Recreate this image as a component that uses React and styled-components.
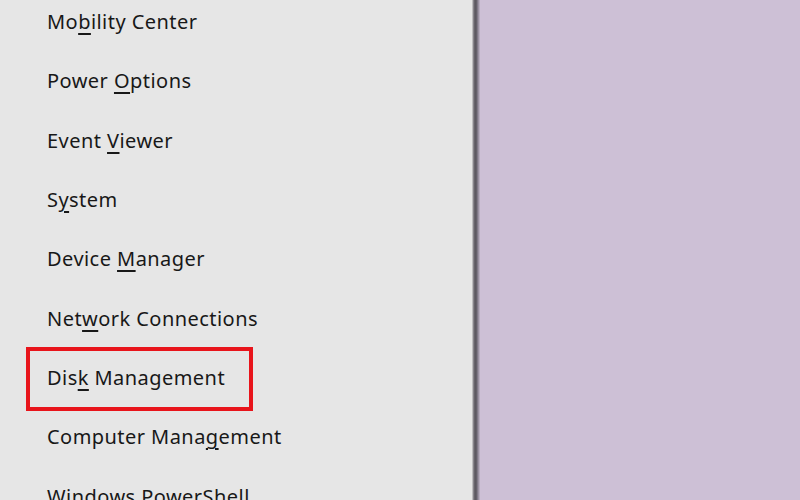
import styled, { createGlobalStyle } from "styled-components";

const GlobalStyle = createGlobalStyle`
    html, body {
        margin: 0;
        padding: 0;
        overflow: hidden;
    }
`;

const Screen = styled.div`
    display: flex;
    width: 800px;
    height: 500px;
    overflow: hidden;
`;

const Menu = styled.ul`
    width: 472px;
    margin: -8px 0 0;
    padding: 0;
    list-style: none;
    background-color: #e6e6e6;
    font-family: "Noto Sans", "Open Sans", sans-serif;
    font-size: 20px;
    color: #181818;
`;

const Item = styled.li`
    position: relative;
    display: flex;
    align-items: center;
    height: 59.3px;
    padding-left: 47px;
    letter-spacing: 0.45px;

    ${(p) =>
        p.$marked &&
        `
        &::after {
            content: "";
            position: absolute;
            left: 26px;
            top: -1px;
            width: 219px;
            height: 56px;
            border: 4px solid #e8141b;
        }
    `}
`;

const Key = styled.span`
    text-decoration: underline;
    text-underline-offset: 4px;
    text-decoration-thickness: 1.5px;
`;

const Divider = styled.div`
    width: 8px;
    background: linear-gradient(
        to right,
        #d8d8d8 0px,
        #6c6870 2px,
        #58545c 4px,
        #8c8494 6px,
        #c4b8cc 8px
    );
`;

const Desktop = styled.div`
    flex: 1;
    background-color: #cdc0d6;
`;

const items = [
    ["Mo", "b", "ility Center"],
    ["Power ", "O", "ptions"],
    ["Event ", "V", "iewer"],
    ["S", "y", "stem"],
    ["Device ", "M", "anager"],
    ["Net", "w", "ork Connections"],
    ["Dis", "k", " Management", true],
    ["Computer Mana", "g", "ement"],
    ["W", "i", "ndows PowerShell"],
];

export default function App() {
    return (
        <Screen>
            <GlobalStyle />
            <Menu>
                {items.map(([before, key, after, marked]) => (
                    <Item key={before + key} $marked={marked}>
                        <span>
                            {before}
                            <Key>{key}</Key>
                            {after}
                        </span>
                    </Item>
                ))}
            </Menu>
            <Divider />
            <Desktop />
        </Screen>
    );
}
